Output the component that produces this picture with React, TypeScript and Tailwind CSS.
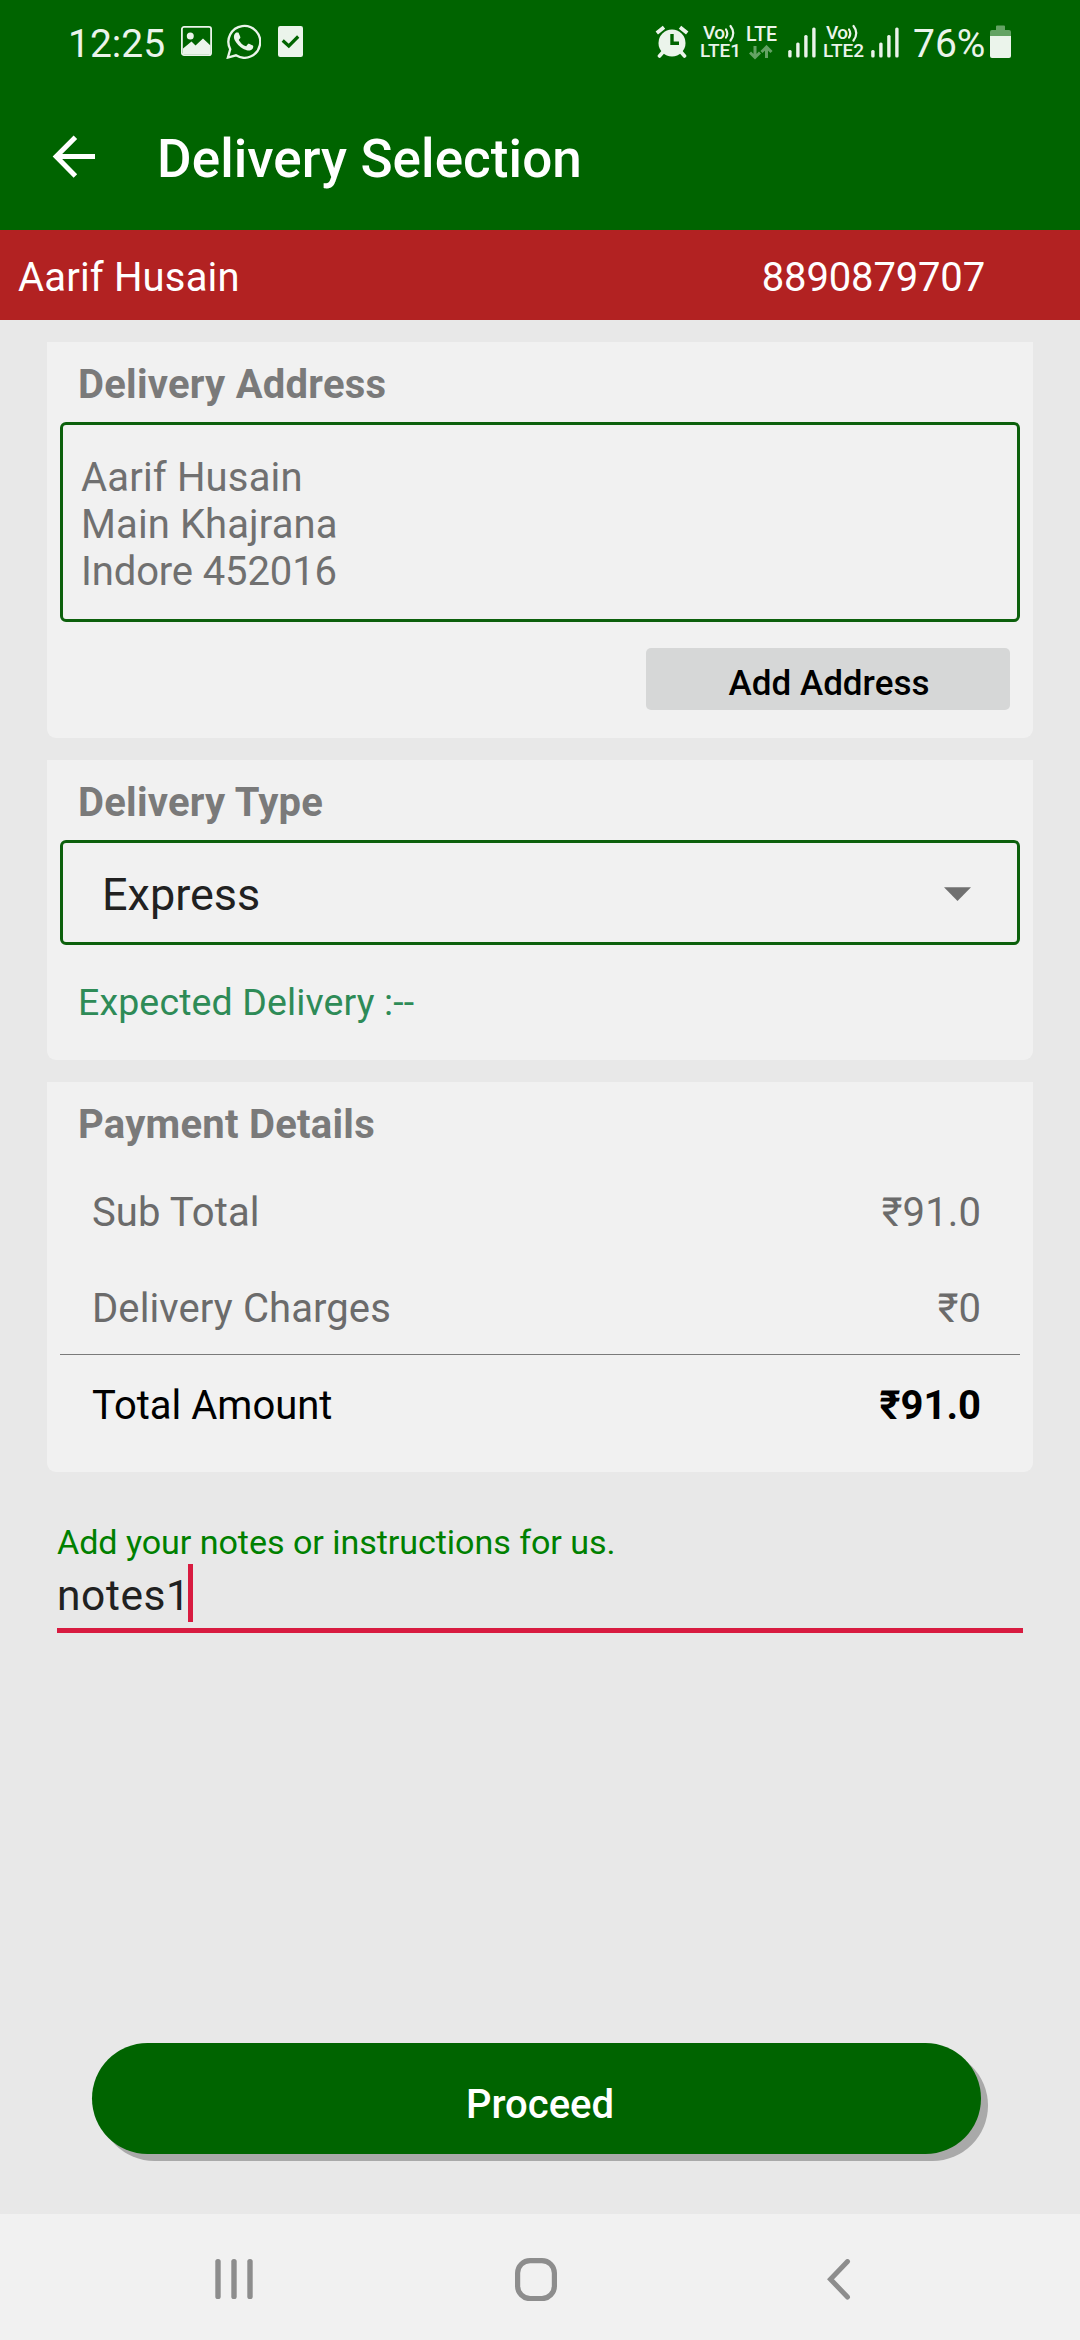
import type { ReactNode } from "react";

function PictureIcon() {
  return (
    <svg className="ml-[17px] mt-[26px] h-[30px] w-[31px]" viewBox="0 0 31 30" fill="none">
      <rect x="0.9" y="0.9" width="29.2" height="28.2" rx="2.2" stroke="#ebf4eb" strokeWidth="1.8" />
      <circle cx="9.3" cy="10" r="3.5" fill="#ebf4eb" />
      <path d="M2 22.5L10.5 15.5L14.5 19.5L22 12.5L29.5 19.5V28.5H2Z" fill="#ebf4eb" />
    </svg>
  );
}

function WhatsAppIcon() {
  return (
    <svg className="ml-[14px] mt-[24px] h-[35px] w-[35px]" viewBox="0 0 24 24" fill="#ebf4eb">
      <path
        transform="translate(-1.2 -1.2) scale(1.1)"
        d="M17.472 14.382c-.297-.149-1.758-.867-2.03-.967-.273-.099-.471-.148-.67.15-.197.297-.767.966-.94 1.164-.173.199-.347.223-.644.075-.297-.15-1.255-.463-2.39-1.475-.883-.788-1.48-1.761-1.653-2.059-.173-.297-.018-.458.13-.606.134-.133.298-.347.446-.52.149-.174.198-.298.298-.497.099-.198.05-.371-.025-.52-.075-.149-.669-1.612-.916-2.207-.242-.579-.487-.5-.669-.51-.173-.008-.371-.01-.57-.01-.198 0-.52.074-.792.372-.272.297-1.04 1.016-1.04 2.479 0 1.462 1.065 2.875 1.213 3.074.149.198 2.096 3.2 5.077 4.487.709.306 1.262.489 1.694.625.712.227 1.36.195 1.871.118.571-.085 1.758-.719 2.006-1.413.248-.694.248-1.289.173-1.413-.074-.124-.272-.198-.57-.347"
      />
      <path
        d="M1.3 23L2.9 17.3A10.9 10.9 0 1 1 6.8 21.5Z"
        fill="none"
        stroke="#ebf4eb"
        strokeWidth="1.6"
      />
    </svg>
  );
}

function TaskIcon() {
  return (
    <svg className="ml-[17px] mt-[26px] h-[31px] w-[25px]" viewBox="0 0 25 31" fill="none">
      <rect width="25" height="31" rx="2.2" fill="#ebf4eb" />
      <path d="M4.7 14.5L10.8 20L20.2 10.5" stroke="#006400" strokeWidth="3.2" />
    </svg>
  );
}

function AlarmIcon() {
  return (
    <svg className="mt-[25px] h-[33px] w-[34px]" viewBox="0 0 34 33" fill="none" stroke="#ebf4eb">
      <circle cx="17" cy="18" r="13.5" fill="#ebf4eb" stroke="none" />
      <path d="M1.8 8L9 2.2M32.2 8L25 2.2" strokeWidth="3.8" />
      <path d="M8 27L4.5 31M26 27L29.5 31" strokeWidth="3.6" strokeLinecap="round" />
      <path d="M17 9V18.3H24" stroke="#006400" strokeWidth="3.4" />
    </svg>
  );
}

function VoLte({ label, className }: { label: string; className: string }) {
  return (
    <div className={className}>
      <div className="flex h-[18px] pl-[3px]">
        <span className="text-[19px] leading-[18px] font-medium tracking-[-0.5px]">Vo</span>
        <svg
          className="h-[18px] w-[11px]"
          viewBox="0 0 11 18"
          fill="none"
          stroke="#ebf4eb"
          strokeWidth="2.2"
          strokeLinecap="round"
        >
          <path d="M1 5.5Q3.6 9.5 1 13.5" />
          <path d="M5.5 2Q11 9 5.5 16.5" />
        </svg>
      </div>
      <div className="text-[19px] leading-[18px] font-medium">{label}</div>
    </div>
  );
}

function Signal({ className }: { className: string }) {
  return (
    <svg className={className} viewBox="0 0 28 31" fill="#ebf4eb">
      <rect x="0.2" y="23" width="3.4" height="7.5" rx="1.5" />
      <rect x="8.2" y="15.5" width="3.4" height="15" rx="1.5" />
      <rect x="16.2" y="8" width="3.4" height="22.5" rx="1.5" />
      <rect x="24.2" y="0.5" width="3.4" height="30" rx="1.5" />
    </svg>
  );
}

function StatusBar() {
  return (
    <div className="flex h-[84px] items-start pl-[68px] text-[#ebf4eb]">
      <div className="mt-[21px] w-[96px] text-[39px] leading-[46px] whitespace-nowrap">12:25</div>
      <PictureIcon />
      <WhatsAppIcon />
      <TaskIcon />
      <div className="ml-[352px] flex items-start">
        <AlarmIcon />
        <VoLte label="LTE1" className="mt-[24px] ml-[11px] w-[40px]" />
        <div className="mt-[25px] ml-[6px] w-[33px]">
          <div className="text-[19.5px] leading-[19px] font-medium">LTE</div>
          <svg
            className="mt-[1px] ml-[3px] h-[15px] w-[24px]"
            viewBox="0 0 24 15"
            fill="none"
            stroke="#64a364"
            strokeWidth="3"
          >
            <path d="M6 1V12M1 7.5L6 12.5L11 7.5" />
            <path d="M17.5 13V3M12.5 7L17.5 2L22.5 7" />
          </svg>
        </div>
        <Signal className="mt-[27px] ml-[9px] h-[31px] w-[28px]" />
        <VoLte label="LTE2" className="mt-[24px] ml-[7px] w-[42px]" />
        <Signal className="mt-[27px] ml-[6px] h-[31px] w-[28px]" />
        <div className="mt-[21px] ml-[14px] w-[71px] text-[39px] leading-[46px] whitespace-nowrap">
          76%
        </div>
        <svg className="mt-[25px] ml-[6px] h-[33px] w-[21px]" viewBox="0 0 21 33">
          <path d="M6 5V1.5Q6 0.5 7 0.5H14Q15 0.5 15 1.5V5H19Q21 5 21 7V11H0V7Q0 5 2 5Z" fill="#64a364" />
          <path d="M0 11H21V31Q21 33 19 33H2Q0 33 0 31Z" fill="#ebf4eb" />
        </svg>
      </div>
    </div>
  );
}

function Card({ title, className, children }: { title: string; className: string; children: ReactNode }) {
  return (
    <section className={className}>
      <h2 className="pl-[31px] text-[40px] leading-[47px] font-bold tracking-[0.25px] text-[#7a7a7a]">
        {title}
      </h2>
      {children}
    </section>
  );
}

function AmountRow({ label, value, className }: { label: string; value: ReactNode; className: string }) {
  return (
    <div className={className}>
      <span>{label}</span>
      {value}
    </div>
  );
}

export default function App() {
  return (
    <div className="flex h-[2340px] w-[1080px] flex-col overflow-hidden bg-[#e8e8e8] font-[Roboto,sans-serif]">
      <header className="h-[230px] shrink-0 bg-[#006400]">
        <StatusBar />
        <div className="flex items-start">
          <svg
            className="mt-[51px] ml-[52px] h-[43px] w-[43px]"
            viewBox="0 0 43 43"
            fill="none"
            stroke="#fff"
            strokeWidth="5"
          >
            <path d="M43 21.6H5M23.4 2.2L4.2 21.6L23.4 41" />
          </svg>
          <h1 className="mt-[44px] ml-[62px] text-[53px] leading-[62px] font-medium tracking-[0.08px] text-white">
            Delivery Selection
          </h1>
        </div>
      </header>

      <div className="flex h-[90px] shrink-0 justify-between bg-[#b22222] pt-6 pr-[95px] pl-[18px] text-[40px] leading-[47px] text-white">
        <span className="tracking-[0.16px]">Aarif Husain</span>
        <span className="tracking-[-0.16px]">8890879707</span>
      </div>

      <main className="flex flex-1 flex-col gap-[22px] px-[47px] pt-[22px]">
        <Card title="Delivery Address" className="h-[396px] rounded-b-[9px] bg-[#f1f1f1] pt-[19px]">
          <div className="mx-[13px] mt-[14px] h-[200px] rounded-[6px] border-3 border-[#0c600c] pt-[29px] pl-[18px] text-[40px] leading-[47px] text-[#707070]">
            <p className="tracking-[0.16px]">Aarif Husain</p>
            <p className="tracking-[0.1px]">Main Khajrana</p>
            <p className="tracking-[-0.13px]">Indore 452016</p>
          </div>
          <button className="mt-[26px] mr-[23px] ml-auto flex h-[62px] w-[364px] justify-center rounded-[5px] bg-[#d6d7d7] pt-[15px] pl-[2px] text-[35px] leading-[41px] font-medium text-black">
            Add Address
          </button>
        </Card>

        <Card title="Delivery Type" className="h-[300px] rounded-b-[9px] bg-[#f1f1f1] pt-[19px]">
          <div className="mx-[13px] mt-[14px] flex h-[105px] items-start justify-between rounded-[6px] border-3 border-[#0c600c] pt-[25px] pr-[46px] pl-[39px] text-[45px] leading-[53px] text-[#212121]">
            <span>Express</span>
            <svg className="mt-[19px] h-[14px] w-[27px]" viewBox="0 0 27 14" fill="#707070">
              <path d="M0 0.3H27L13.5 14Z" />
            </svg>
          </div>
          <p className="mt-[35px] pl-[31px] text-[37.5px] leading-[44px] tracking-[0.13px] text-[#2e8b57]">
            Expected Delivery :--
          </p>
        </Card>

        <Card title="Payment Details" className="h-[390px] rounded-b-[9px] bg-[#f1f1f1] pt-[19px] text-[40px] leading-[47px]">
          <AmountRow
            label="Sub Total"
            className="mt-[41px] flex justify-between pr-[52px] pl-[45px] tracking-[0.1px] text-[#6b6b6b]"
            value={<span>₹91.0</span>}
          />
          <AmountRow
            label="Delivery Charges"
            className="mt-[49px] flex justify-between pr-[52px] pl-[45px] tracking-[0.1px] text-[#6b6b6b]"
            value={<span>₹0</span>}
          />
          <div className="mx-[13px] mt-[22px] h-px bg-[#7a7a7a]" />
          <AmountRow
            label="Total Amount"
            className="mt-[27px] flex justify-between pr-[52px] pl-[45px] text-black"
            value={<strong className="font-bold">₹91.0</strong>}
          />
        </Card>

        <div className="mx-[10px] mt-[28px] flex h-[111px] flex-col border-b-5 border-[#d81b40]">
          <label className="text-[34.125px] leading-[40px] tracking-[-0.07px] text-[#008000]">
            Add your notes or instructions for us.
          </label>
          <div className="flex items-start">
            <span className="mt-[9px] w-[131px] text-[42.5px] leading-[49px] tracking-[0.6px] whitespace-nowrap text-[#212121]">
              notes1
            </span>
            <i className="mt-[2px] h-[58px] w-[5px] bg-[#d81b40]" />
          </div>
        </div>

        <button className="mt-auto mb-[60px] ml-[45px] flex h-[111px] w-[889px] justify-center rounded-full bg-[#006400] pt-[38px] pl-[7px] text-[40px] leading-[47px] font-medium text-white shadow-[7px_7px_0_#a9a9a9]">
          Proceed
        </button>
      </main>

      <nav className="flex h-[126px] shrink-0 items-start bg-[#f1f1f1] pt-[44px]">
        <svg className="mt-px ml-[215px] h-[40px] w-[38px]" viewBox="0 0 38 40" fill="#8d8d8d">
          <rect x="0.3" width="5.4" height="40" rx="2.6" />
          <rect x="16.3" width="5.4" height="40" rx="2.6" />
          <rect x="32.3" width="5.4" height="40" rx="2.6" />
        </svg>
        <svg className="ml-[262px] h-[43px] w-[42px]" viewBox="0 0 42 43" fill="none">
          <rect x="2.6" y="2.6" width="36.8" height="38" rx="12.5" stroke="#8d8d8d" strokeWidth="5.2" />
        </svg>
        <svg className="mt-px ml-[270px] h-[41px] w-[24px]" viewBox="0 0 24 41" fill="none">
          <path
            d="M20.5 2.6L3.5 20.3L20.5 38"
            stroke="#8d8d8d"
            strokeWidth="5"
            strokeLinecap="round"
          />
        </svg>
      </nav>
    </div>
  );
}
